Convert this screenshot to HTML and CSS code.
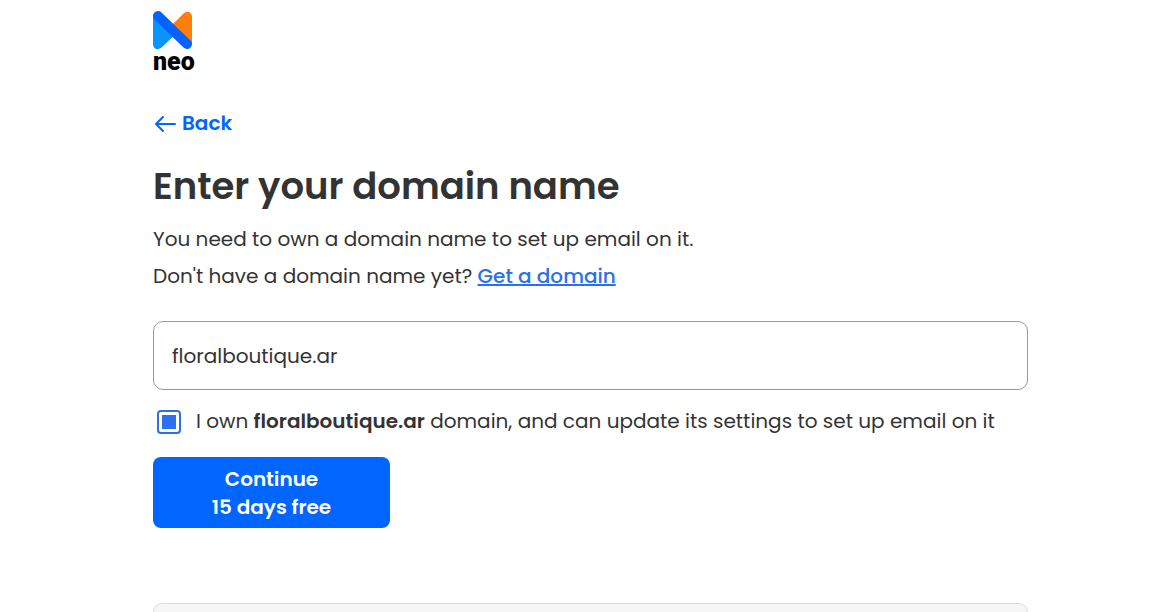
FILE: index.html
```html
<!DOCTYPE html>
<html lang="en">
<head>
<meta charset="utf-8">
<meta name="viewport" content="width=device-width, initial-scale=1">
<title>Enter your domain name</title>
<link rel="stylesheet" href="styles.css">
</head>
<body>
<div class="page">
  <header class="brand">
    <svg class="brand-mark" viewBox="0 0 40 39" aria-hidden="true">
      <path d="M0 5V33C0 38 5 40 9 36L23 23Z" fill="#0a94ff"/>
      <path d="M39 34V6C39 1 34-1 30 3L16 17Z" fill="#ff7f0a"/>
      <path d="M5 5L34 33" stroke="#0562ff" stroke-width="10" stroke-linecap="round"/>
    </svg>
    <span class="brand-name">neo</span>
  </header>
  <main>
    <a class="back" href="#">
      <svg class="back-icon" viewBox="0 0 22 18" aria-hidden="true"><path d="M21 9H2M9 2L2 9L9 16"/></svg>
      <span>Back</span>
    </a>
    <h1 class="title">Enter your domain name</h1>
    <p class="intro">You need to own a domain name to set up email on it.</p>
    <p class="intro">Don't have a domain name yet? <a class="link" href="#">Get a domain</a></p>
    <form class="form">
      <input class="domain" type="text" aria-label="Domain name" value="floralboutique.ar">
      <div class="confirm">
        <input class="check" id="own" type="checkbox" checked>
        <label class="confirm-text" for="own">I own <strong>floralboutique.ar</strong> domain, and can update its settings to set up email on it</label>
      </div>
      <button class="submit" type="button"><span>Continue</span><span>15 days free</span></button>
    </form>
    <section class="panel"></section>
  </main>
</div>
</body>
</html>
```
FILE: styles.css
```css
* { box-sizing: border-box; }
body {
  margin: 0;
  background: #fff;
  color: #333;
  font: 20px/37px Poppins, Inter, sans-serif;
}
.page {
  display: flex;
  flex-direction: column;
  min-height: 100vh;
  padding: 11px 142px 0 153px;
}
.brand { display: flex; flex-direction: column; align-items: flex-start; }
.brand-mark { width: 40px; height: 39px; }
.brand-name {
  color: #000;
  font: 900 25px/24px Roboto, sans-serif;
}
main { display: flex; flex: 1; flex-direction: column; }
.back {
  display: flex;
  align-items: center;
  align-self: flex-start;
  gap: 6px;
  margin-top: 31px;
  color: #06f;
  font-weight: 600;
  text-decoration: none;
}
.back-icon {
  width: 22px;
  height: 18px;
  margin-left: 1px;
  fill: none;
  stroke: #06f;
  stroke-width: 2;
  stroke-linecap: round;
  stroke-linejoin: round;
}
.title {
  margin: 16px 0 7px;
  font-size: 37px;
  line-height: 56px;
  font-weight: 600;
}
.intro { margin: 0; }
.link {
  color: #2a70ea;
  font-weight: 500;
  text-decoration-thickness: 2px;
  text-underline-offset: 1px;
}
.form { display: flex; flex-direction: column; align-items: flex-start; margin-top: 26px; }
.domain {
  width: 100%;
  height: 69px;
  padding: 0 18px;
  border: 1px solid #999;
  border-radius: 10px;
  background: #fff;
  color: #333;
  font: inherit;
}
.confirm { display: flex; align-items: center; gap: 15px; margin: 13px 0 17px 4px; }
.check {
  appearance: none;
  flex: none;
  width: 24px;
  height: 24px;
  margin: 0;
  border: 2px solid #2f6fe4;
  border-radius: 4px;
}
.check:checked { padding: 3px; background: #2a70f5 content-box; }
.confirm-text strong { font-weight: 600; }
.submit {
  display: flex;
  flex-direction: column;
  align-items: center;
  width: 237px;
  padding: 8px 0 7px;
  border: 0;
  border-radius: 8px;
  background: #06f;
  color: #fff;
  font: inherit;
  font-weight: 600;
  line-height: 28px;
}
.panel {
  flex: 1;
  margin-top: 75px;
  border: 1px solid #dcdcdc;
  border-bottom: 0;
  border-radius: 16px 16px 0 0;
  background: #f6f6f6;
}
```
